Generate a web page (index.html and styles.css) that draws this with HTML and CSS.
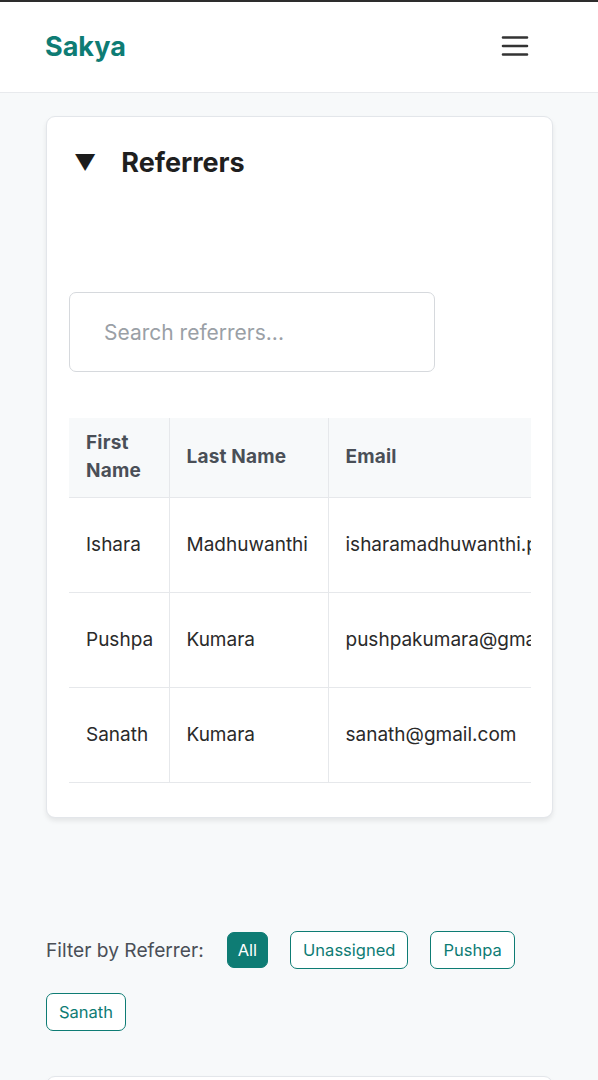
FILE: index.html
```html
<!DOCTYPE html>
<html lang="en">
<head>
<meta charset="utf-8">
<title>Sakya</title>
<link rel="stylesheet" href="styles.css">
</head>
<body>
<header class="topbar">
  <div class="logo">Sakya</div>
  <button class="menu" aria-label="Menu">
    <svg width="28" height="24" viewBox="0 0 28 24"><path d="M2 3.5H26M2 12H26M2 20.5H26" stroke="#333" stroke-width="2.6" stroke-linecap="round"/></svg>
  </button>
</header>
<main class="page">
  <section class="card">
    <div class="card-head">
      <span class="caret">▼</span>
      <h2 class="card-title">Referrers</h2>
    </div>
    <input class="search" type="text" placeholder="Search referrers...">
    <div class="table-wrap">
      <table class="ref-table">
        <colgroup>
          <col class="c1"><col class="c2"><col class="c3">
        </colgroup>
        <thead>
          <tr>
            <th>First Name</th>
            <th>Last Name</th>
            <th>Email</th>
          </tr>
        </thead>
        <tbody>
          <tr><td>Ishara</td><td>Madhuwanthi</td><td>isharamadhuwanthi.perera@gmail.com</td></tr>
          <tr><td>Pushpa</td><td>Kumara</td><td>pushpakumara@gmail.com</td></tr>
          <tr><td>Sanath</td><td>Kumara</td><td>sanath@gmail.com</td></tr>
        </tbody>
      </table>
    </div>
  </section>
  <div class="filters">
    <span class="filter-label">Filter by Referrer:</span>
    <button class="chip active">All</button>
    <button class="chip">Unassigned</button>
    <button class="chip">Pushpa</button>
    <button class="chip">Sanath</button>
  </div>
  <section class="card next"></section>
</main>
</body>
</html>
```
FILE: styles.css
```css
* { box-sizing: border-box; }
html, body { margin: 0; padding: 0; }
body {
  background: #f7f9fa;
  font-family: Inter, "Noto Sans", "Liberation Sans", sans-serif;
  color: #222;
  border-top: 2px solid #2d2d2d;
  overflow: hidden;
}
.topbar {
  height: 91px;
  background: #fff;
  border-bottom: 1px solid #e8eaed;
  display: flex;
  align-items: center;
  justify-content: space-between;
  padding: 0 69px 0 45px;
}
.logo {
  color: #0e7c74;
  font-size: 27px;
  font-weight: 700;
  margin-top: -1px;
}
.menu {
  background: none;
  border: 0;
  padding: 0;
  display: flex;
  margin-top: -2px;
}
.page {
  padding: 23px 45px 0 46px;
}
.card {
  background: #fff;
  border: 1px solid #e3e6ea;
  border-radius: 9px;
  box-shadow: 0 3px 5px rgba(0,0,0,0.08);
  padding: 22px 22px 34px 22px;
}
.card-head {
  display: flex;
  align-items: center;
  gap: 25px;
  padding-left: 5px;
  height: 46px;
}
.caret {
  font-size: 22px;
  color: #1c1c1c;
  line-height: 1;
}
.card-title {
  margin: 0;
  font-size: 27px;
  font-weight: 700;
  color: #1f1f1f;
}
.search {
  display: block;
  margin-top: 107px;
  width: 366px;
  height: 80px;
  border: 1px solid #d6d9dd;
  border-radius: 7px;
  padding: 0 34px;
  font-family: inherit;
  font-size: 21px;
  color: #222;
  background: #fff;
}
.search::placeholder { color: #9aa0a6; }
.table-wrap {
  margin-top: 46px;
  overflow: hidden;
  width: 462px;
}
.ref-table {
  border-collapse: collapse;
  table-layout: fixed;
  width: 600px;
  white-space: nowrap;
  font-size: 19px;
}
.ref-table .c1 { width: 100px; }
.ref-table .c2 { width: 159px; }
.ref-table .c3 { width: 341px; }
.ref-table th {
  background: #f7f9fa;
  color: #4a4f57;
  font-weight: 700;
  text-align: left;
  padding: 11px 17px;
  line-height: 28px;
  height: 79px;
  white-space: normal;
  letter-spacing: 0.2px;
  border-bottom: 1px solid #e6e8eb;
}
.ref-table th + th, .ref-table td + td { border-left: 1px solid #e6e8eb; }
.ref-table td {
  height: 95px;
  padding: 0 17px;
  color: #2a2a2a;
  border-bottom: 1px solid #e6e8eb;
}
.filters {
  margin-top: 113px;
  display: flex;
  flex-wrap: wrap;
  align-items: center;
  column-gap: 22px;
  row-gap: 24px;
}
.filter-label {
  font-size: 19.2px;
  color: #4a4f57;
  margin-right: 1px;
}
.chip {
  font-family: inherit;
  font-size: 16.5px;
  color: #0e7c74;
  background: #fff;
  border: 1px solid #0e7c74;
  border-radius: 7px;
  height: 38px;
  padding: 0 12px;
}
.chip.active {
  background: #0e7c74;
  color: #fff;
  height: 36px;
  padding: 0 10px;
}
.card.next {
  margin-top: 45px;
  height: 60px;
}
```
